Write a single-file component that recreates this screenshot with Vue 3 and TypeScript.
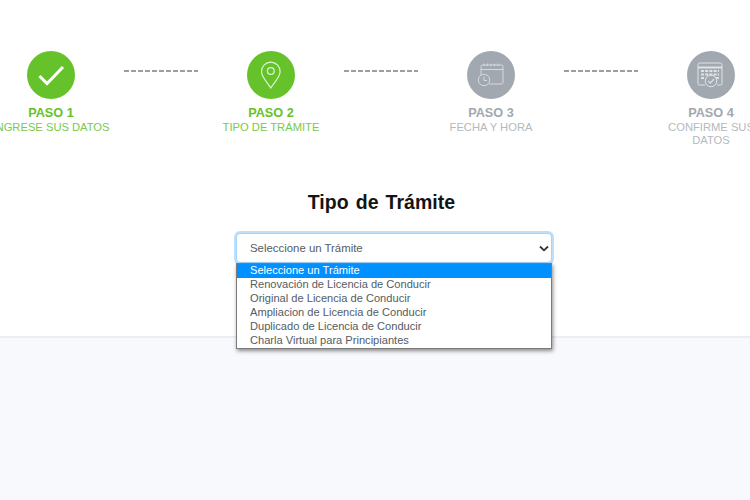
<script setup lang="ts">
interface Step {
  title: string
  text: string
  icon: 'check' | 'pin' | 'clock' | 'confirm'
  done: boolean
}

const steps: Step[] = [
  { title: 'PASO 1', text: 'INGRESE SUS DATOS', icon: 'check', done: true },
  { title: 'PASO 2', text: 'TIPO DE TRÁMITE', icon: 'pin', done: true },
  { title: 'PASO 3', text: 'FECHA Y HORA', icon: 'clock', done: false },
  { title: 'PASO 4', text: 'CONFIRME SUS DATOS', icon: 'confirm', done: false }
]

const options = [
  'Seleccione un Trámite',
  'Renovación de Licencia de Conducir',
  'Original de Licencia de Conducir',
  'Ampliacion de Licencia de Conducir',
  'Duplicado de Licencia de Conducir',
  'Charla Virtual para Principiantes'
]
</script>

<template>
  <div class="page">
    <section class="top">
      <div class="steps">
        <template v-for="(step, i) in steps" :key="step.title">
          <div class="step" :class="{ 'step--done': step.done }">
            <div class="step__circle">
              <svg v-if="step.icon === 'check'" width="48" height="48" viewBox="0 0 48 48" fill="none" stroke="#fff" stroke-width="3">
                <path d="M12.5 25 L20 32.5 L36 16" />
              </svg>
              <svg v-else-if="step.icon === 'pin'" width="48" height="48" viewBox="0 0 48 48" fill="none" stroke="#dff3cf" stroke-width="1.2">
                <path d="M23.800 37 C20 30.500 14.500 26.500 14.500 20.500 A9.300 9.300 0 0 1 33.100 20.500 C33.100 26.500 27.600 30.500 23.800 37 Z" />
                <circle cx="23.800" cy="20" r="3.400" />
              </svg>
              <svg v-else-if="step.icon === 'clock'" width="48" height="48" viewBox="0 0 48 48" fill="none" stroke="#d6dade" stroke-width="1">
                <path d="M22 33 H34.500 A1.500 1.500 0 0 0 36 31.500 V15.500 A1.500 1.500 0 0 0 34.500 14 H15.500 A1.500 1.500 0 0 0 14 15.500 V24" />
                <path d="M14 18.500 H36" />
                <path d="M17 12.500 V15 M20.500 12.500 V15 M24 12.500 V15 M27.500 12.500 V15 M31 12.500 V15" />
                <circle cx="17" cy="29" r="5.700" />
                <path d="M17 25.500 V29.500 H20" />
              </svg>
              <svg v-else width="48" height="48" viewBox="0 0 48 48" fill="none" stroke="#e0e3e6" stroke-width="1">
                <path d="M18 34 H12.500 A1.500 1.500 0 0 1 11 32.500 V13.500 A1.500 1.500 0 0 1 12.500 12 H33.500 A1.500 1.500 0 0 1 35 13.500 V32.500 A1.500 1.500 0 0 1 33.500 34 H30" />
                <path d="M11 16.500 H35" stroke-width="2" />
                <path d="M14 20 H32 M14 23.500 H32 M14 27 H17 M29 27 H32" stroke-dasharray="3 1.200" stroke-width="2" />
                <circle cx="24" cy="30" r="5.800" fill="#a2a8af" />
                <path d="M21.300 30 L23.300 32.200 L27 28" stroke-width="1.200" />
              </svg>
            </div>
            <div class="step__title">{{ step.title }}</div>
            <div class="step__text">{{ step.text }}</div>
          </div>
          <div v-if="i < steps.length - 1" class="connector"><span class="connector__line"></span></div>
        </template>
      </div>

      <h1 class="heading">Tipo de Trámite</h1>

      <div class="picker">
        <select class="picker__select">
          <option>{{ options[0] }}</option>
        </select>
        <ul class="picker__list">
          <li v-for="(option, i) in options" :key="option" :class="{ active: i === 0 }">{{ option }}</li>
        </ul>
      </div>
    </section>
    <section class="bottom"></section>
  </div>
</template>

<style scoped>
.page {
  width: 750px;
  height: 500px;
  overflow: hidden;
  display: flex;
  flex-direction: column;
  font-family: "Liberation Sans", Arial, sans-serif;
  background: #fff;
}

.top {
  height: 336px;
  flex: none;
  padding-top: 51px;
  box-sizing: border-box;
}

.steps {
  display: flex;
  margin-left: -11px;
  width: 785px;
}

.step {
  width: 124px;
  flex: none;
  display: flex;
  flex-direction: column;
  align-items: center;
  text-align: center;
}

.step__circle {
  width: 48px;
  height: 48px;
  border-radius: 50%;
  background: #a2a8af;
  margin-bottom: 7px;
}

.step__circle svg {
  display: block;
}

.step--done .step__circle {
  background: #66c22a;
}

.step__title {
  font-size: 12.7px;
  line-height: 15px;
  font-weight: 700;
  color: #a2a8af;
}

.step__text {
  font-size: 11.2px;
  line-height: 13px;
  color: #b4b9be;
}

.step--done .step__title {
  color: #66c22a;
}

.step--done .step__text {
  color: #79c94a;
}

.connector {
  width: 96px;
  flex: none;
  height: 48px;
  display: flex;
  align-items: center;
  justify-content: center;
}

.connector__line {
  width: 74px;
  height: 2px;
  background: repeating-linear-gradient(90deg, #9a9fa5 0 5px, transparent 5px 7px);
  margin-top: -8px;
}

.heading {
  margin: 43px 0 0;
  padding-left: 13px;
  font-size: 19.5px;
  line-height: 24px;
  font-weight: 700;
  letter-spacing: 0.05px;
  word-spacing: 1.5px;
  text-align: center;
  color: #141414;
}

.picker {
  position: relative;
  width: 316px;
  margin: 19px 0 0 236px;
}

.picker__select {
  display: block;
  width: 316px;
  height: 30px;
  box-sizing: border-box;
  padding: 0 12px 0 13px;
  border: 1px solid #a5d3fb;
  border-radius: 4px;
  box-shadow: 0 0 0 2px #bfe0fb;
  background: #fff url("data:image/svg+xml,%3Csvg xmlns='http://www.w3.org/2000/svg' width='10' height='7' viewBox='0 0 10 7' fill='none' stroke='%23333' stroke-width='1.8'%3E%3Cpath d='M1 1.500 L5 5.300 L9 1.500'/%3E%3C/svg%3E") no-repeat right 2px center;
  appearance: none;
  outline: none;
  font-family: inherit;
  font-size: 11.4px;
  color: #555c63;
}

.picker__list {
  position: absolute;
  top: 30px;
  left: 0;
  width: 316px;
  box-sizing: border-box;
  margin: 0;
  padding: 0;
  list-style: none;
  background: #fff;
  border: 1px solid #7b7b7b;
  box-shadow: 1px 2px 4px rgba(0, 0, 0, 0.45);
  font-size: 11.1px;
  line-height: 12px;
  color: #555c63;
}

.picker__list li {
  padding-left: 13px;
  height: 14px;
  white-space: nowrap;
}

.picker__list li.active {
  background: #0090ff;
  color: #fff;
}

.bottom {
  flex: 1;
  background: #f8f9fc;
  border-top: 2px solid #eceef2;
}
</style>
